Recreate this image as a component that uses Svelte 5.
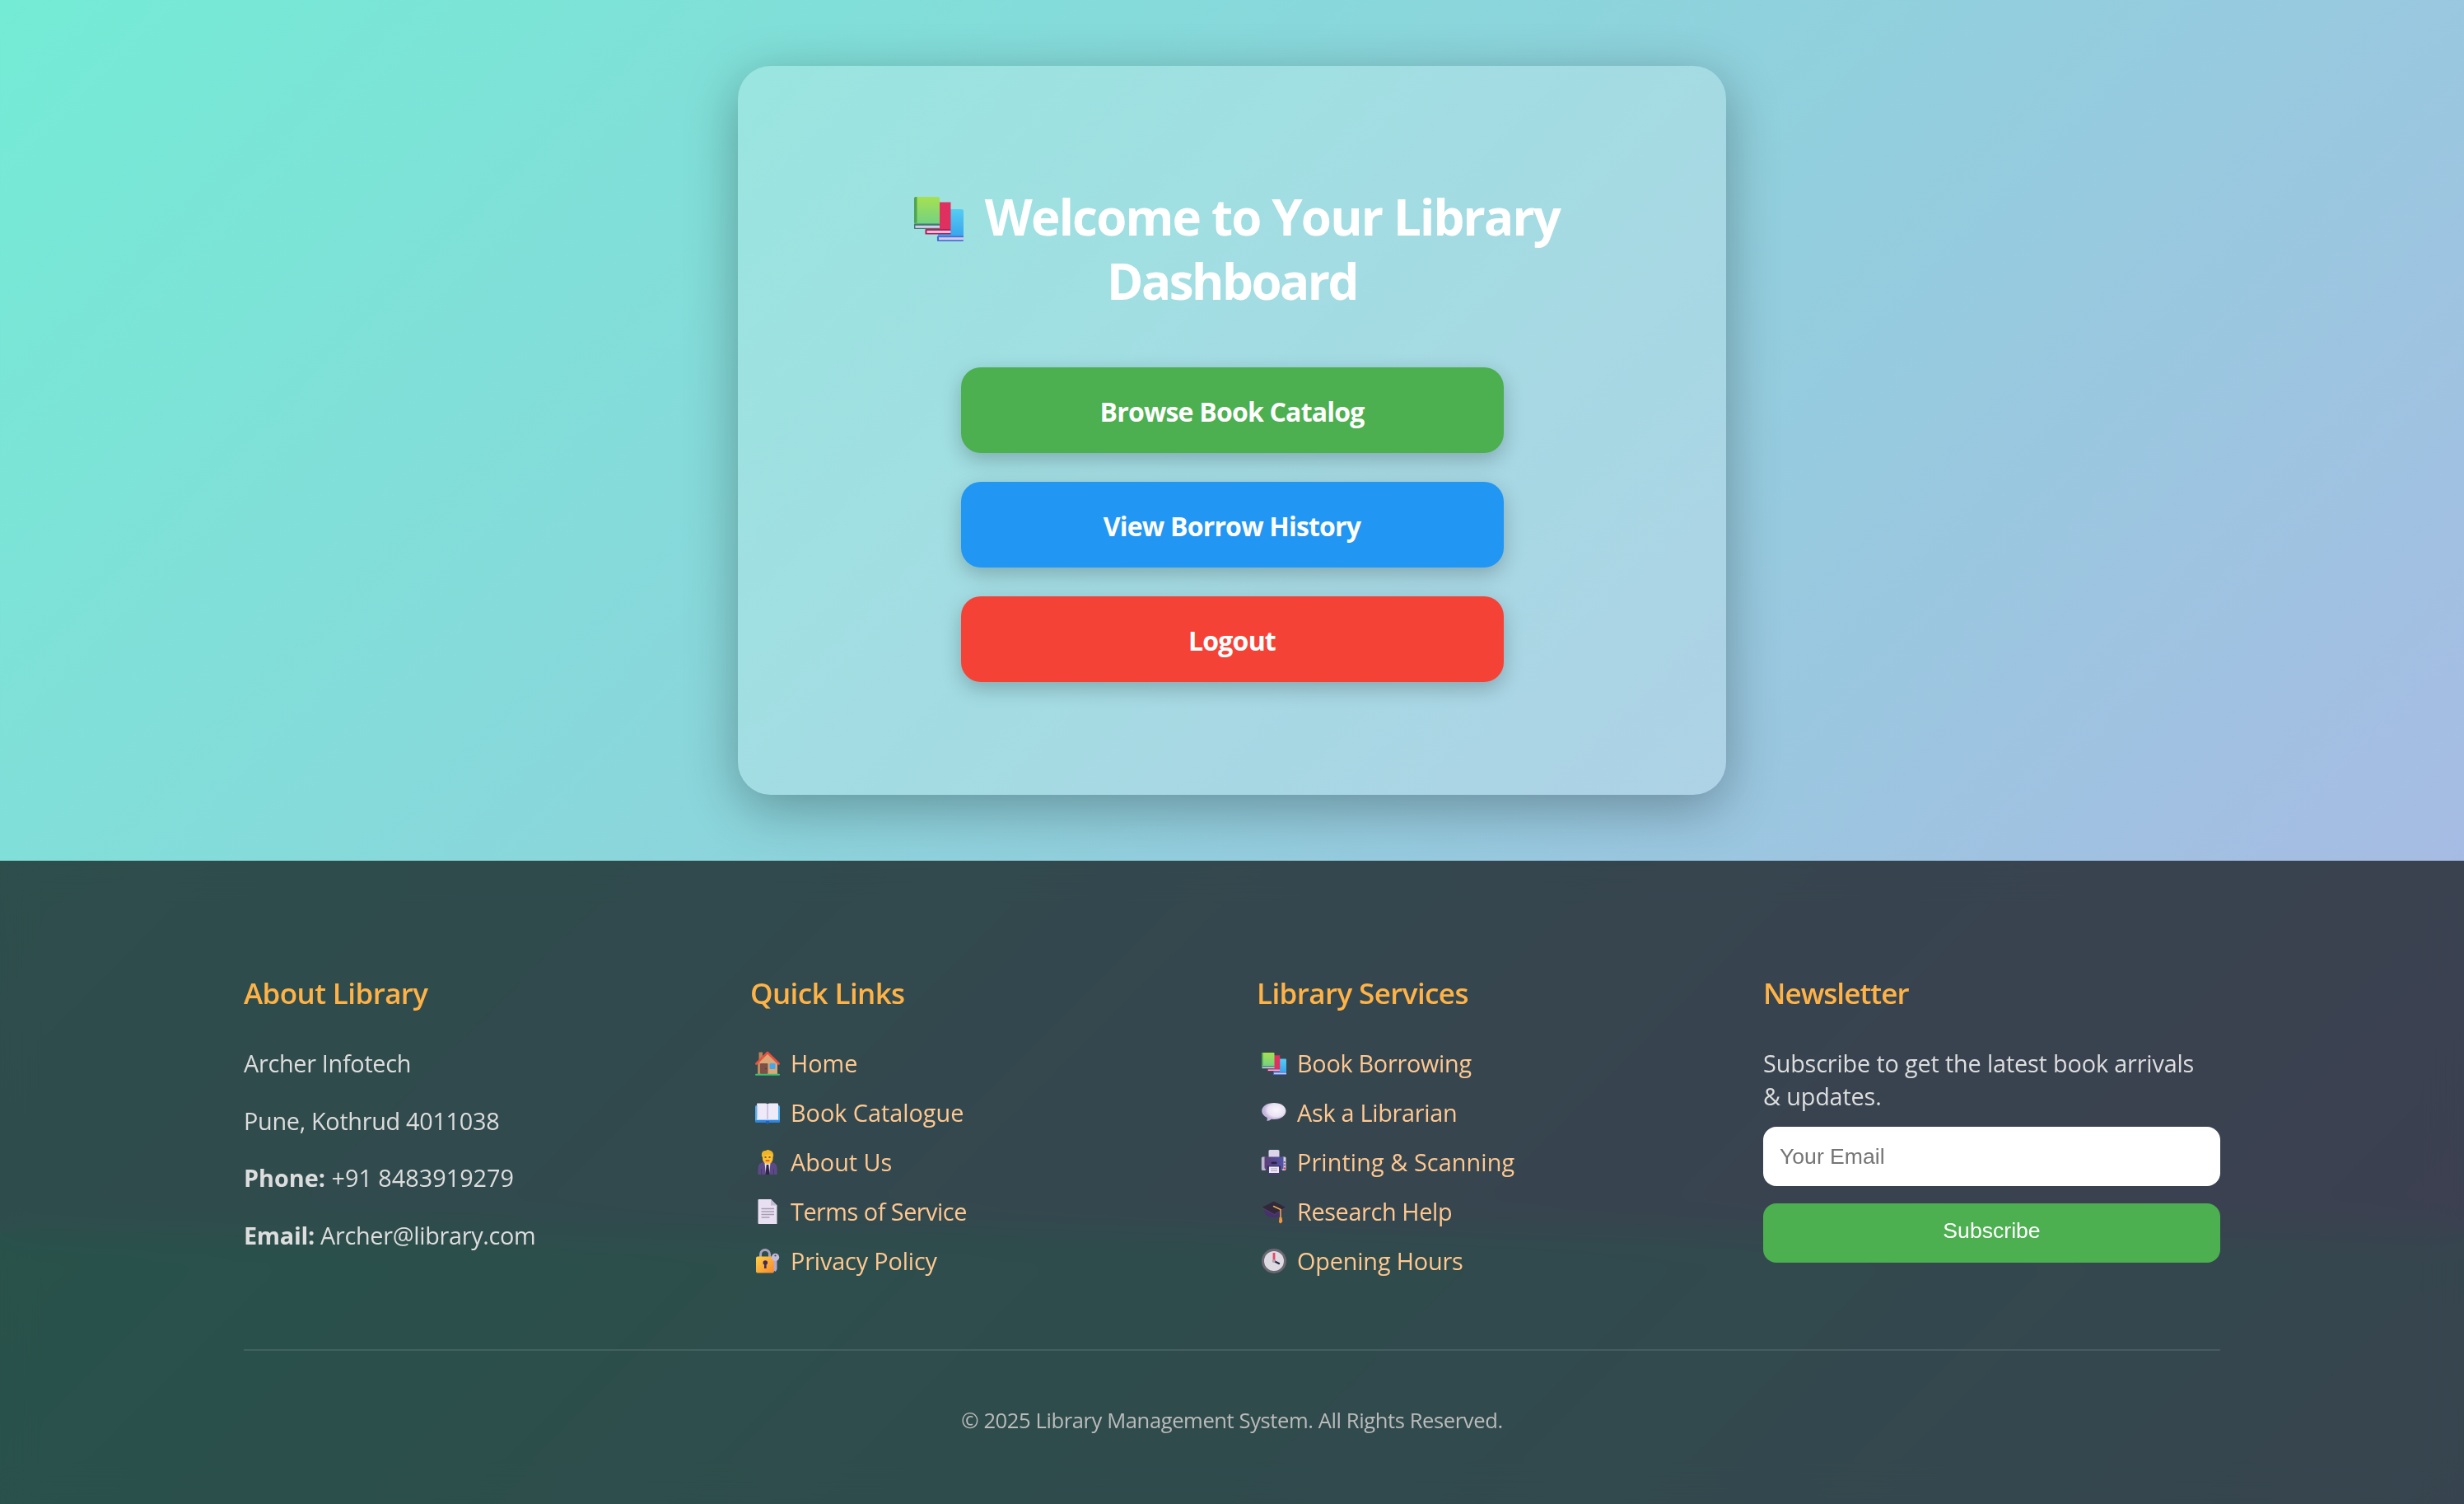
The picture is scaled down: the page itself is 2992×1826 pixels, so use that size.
<script>
  // icon, label, letter spacing in px
  const quick = [
    ['home', 'Home', 0],
    ['book', 'Book Catalogue', 0],
    ['person', 'About Us', 0],
    ['page', 'Terms of Service', -0.48],
    ['lock', 'Privacy Policy', -0.14],
  ];
  const services = [
    ['books', 'Book Borrowing', -0.27],
    ['bubble', 'Ask a Librarian', -0.27],
    ['printer', 'Printing & Scanning', 0.1],
    ['cap', 'Research Help', -0.36],
    ['clock', 'Opening Hours', -0.15],
  ];
</script>

<svelte:head><title>Library Dashboard</title></svelte:head>

{#snippet icon(name)}
  <svg class="icon" viewBox="0 0 32 32" aria-hidden="true">
    {#if name === 'home'}
      <path d="M5.500 2.500h4.500v10H5.500z" fill="#b98258" />
      <path d="M4 15 16 4l12 11v14H4z" fill="#dca777" />
      <path d="M4 15h3v14H4z" fill="#c08a5c" />
      <path d="M2.300 16.500 16 3l13.700 13.500" fill="none" stroke="#e9503f" stroke-width="2.600" stroke-linecap="round" stroke-linejoin="round" />
      <rect x="7" y="16" width="9.500" height="13" rx="1" fill="#7d5148" />
      <circle cx="14" cy="22.500" r=".7" fill="#4c2f2e" />
      <rect x="18.500" y="16" width="7" height="7" rx="1" fill="#3fa9f0" />
      <rect x="1" y="28.800" width="30" height="2" rx="1" fill="#38c172" />
    {:else if name === 'book'}
      <rect x="1" y="7" width="30" height="20.500" rx="1.500" fill="#4eb4f2" />
      <rect x="1" y="25" width="30" height="2.800" rx="1" fill="#2c86e4" />
      <path d="M3 5.500q0-1 1-1h10l2 1 2-1h10q1 0 1 1v19H3z" fill="#efeaf8" />
      <path d="M3 6h1.200v17H3z" fill="#cfc3e0" />
      <path d="M15 5.500h2V25h-2z" fill="#cfc6e6" />
      <path d="M14 26h4v1.500a2 2 0 0 1-4 0z" fill="#1f63c8" />
    {:else if name === 'person'}
      <path d="M4.500 31v-8q0-6 7-7h9q7 1 7 7v8z" fill="#5c4a86" />
      <path d="M12.500 17h7L18 31h-4z" fill="#e6e0f2" />
      <path d="M14.700 19h2.600l1.200 12h-5z" fill="#2e2344" />
      <path d="M8.500 24v7M23.500 24v7" stroke="#473a70" />
      <rect x="10" y="3" width="12.500" height="15" rx="6" fill="#fbc02f" />
      <path d="M9 9Q8 1.500 14 2 16 0 19 1.800 24 3 23 10L20.500 6l-6.500 1-4 3z" fill="#eeb52a" />
      <path d="M12.500 10h2M17.500 10h2" stroke="#5b3a2a" stroke-width="1.300" />
      <path d="M14.200 14.200h3.600" stroke="#d2433f" stroke-width="1.500" stroke-linecap="round" />
    {:else if name === 'page'}
      <path d="M4.500 2q0-1 1-1H20l7.500 7.500V31h-22q-1 0-1-1z" fill="#e8e0f2" />
      <path d="M20 1v7.500h7.500z" fill="#c4bad2" />
      <path d="M9 12.500h14.500M9 16h14.500M9 19.500h14.500M9 23h9" stroke="#a79db2" stroke-width="1.300" stroke-linecap="round" />
    {:else if name === 'lock'}
      <path d="M7.500 11V8a5.500 5.500 0 0 1 11 0V11" fill="none" stroke="#aaa1bc" stroke-width="3" />
      <rect x="2" y="10.500" width="22" height="20" rx="2" fill="url(#lockFill)" />
      <circle cx="13.300" cy="18" r="2.800" fill="#442a59" />
      <path d="M12 18h2.600v7H12z" fill="#442a59" />
      <path d="M24 12h3.500v14l-1.800 3-2-1.500z" fill="#b5a8cc" />
      <circle cx="25.500" cy="11.500" r="4.700" fill="#c5bad8" />
      <circle cx="25.500" cy="9.500" r="1.100" fill="#51436a" />
    {:else if name === 'books'}
      <g transform="matrix(1.034 0 0 .931 -1.07 2.07)">
        <path d="M16 9h14q1 0 1 1v17H16z" fill="url(#blueFill)" />
        <rect x="15.500" y="26.500" width="15.500" height="3.500" rx=".5" fill="#3d6fd4" />
        <rect x="16.500" y="27.400" width="14.500" height="1.700" fill="#d5c8f0" />
        <path d="M9 4.500h14.500V22H9z" fill="#e0305f" />
        <rect x="8.500" y="22" width="15" height="3.500" rx=".5" fill="#b71f52" />
        <rect x="9.500" y="23" width="14" height="1.600" fill="#e0c2e8" />
        <path d="M2 2q0-1 1-1h13q1 0 1 1v17H2z" fill="url(#greenFill)" />
        <path d="M2 2q0-1 1-1h.7v17H2z" fill="#4fa552" />
        <rect x="2" y="18.500" width="15" height="3.500" rx=".5" fill="#407a72" />
        <rect x="2.700" y="19.700" width="14.300" height="1.600" fill="#d9cbed" />
      </g>
    {:else if name === 'bubble'}
      <path d="M16 4c8.500 0 14.500 4.200 14.500 9.800S24.500 24 16 24c-1 0-2 0-3-.2Q11 25.800 7.500 26l.3-4C4 20.200 1.200 17.500 1.200 13.800 1.200 8.200 7.500 4 16 4z" fill="url(#bubbleFill)" />
    {:else if name === 'printer'}
      <rect x=".8" y="9.500" width="5.500" height="16.500" rx="1.500" fill="#beb5ce" />
      <rect x="25.500" y="9.500" width="5" height="16.500" rx="1.500" fill="#d6cee2" />
      <rect x="9.500" y="1" width="13" height="11" rx="1.500" fill="#dcd4e8" />
      <path d="M4.500 9.500h23V22q0 3-3 3h-17q-3 0-3-3z" fill="url(#printerFill)" />
      <rect x="12.500" y="15.500" width="7" height="2.800" rx="1" fill="#2a2344" />
      <path d="M8 20.500h16v4H8z" fill="#33285a" />
      <rect x="9" y="21" width="14" height="10" rx="1" fill="#4a397c" />
      <path d="M10 21.500h12v7.500H10z" fill="#f0ebf7" />
      <path d="M12 24h8M12 26.500h8" stroke="#aaa0ba" />
      <circle cx="28.700" cy="23.500" r="1.300" fill="#e3375b" />
      <path d="M27.700 16h2M27.700 19.500h2" stroke="#5b4a78" stroke-width="1.300" />
    {:else if name === 'cap'}
      <path d="M4.500 12h22v5q-2 6-11 6t-11-6z" fill="#47306d" />
      <path d="M16 3.500 30.500 11 16.500 19.500 1 11z" fill="#32283c" />
      <path d="m1 11 15.500 8.500 14-8.500" fill="none" stroke="#594a68" stroke-width=".8" />
      <path d="m15.500 9.500 8.500 4V24" fill="none" stroke="#eab047" stroke-width="1.500" stroke-linecap="round" />
      <path d="M22.500 23h3l.8 5-2.300 2.500-2-1.500z" fill="#f5983d" />
    {:else}
      <circle cx="16" cy="16" r="15" fill="#6c6872" />
      <circle cx="16" cy="16" r="12" fill="#dedae2" />
      <path d="M16 6v10" stroke="#e84665" stroke-width="2.800" />
      <path d="m17 16.500 5 2.500" stroke="#2b2346" stroke-width="2.300" stroke-linecap="round" />
      <circle cx="15.700" cy="16" r="2" fill="#aaa5b0" />
    {/if}
  </svg>
{/snippet}

{#snippet links(items)}
  <ul>
    {#each items as [name, label, track]}
      <li>{@render icon(name)}<a href="#top" style:letter-spacing="{track}px">{label}</a></li>
    {/each}
  </ul>
{/snippet}

<svg class="defs" width="0" height="0" aria-hidden="true">
  <defs>
    <linearGradient id="lockFill" x1="0" y1="0" x2="1" y2="1"><stop offset="0" stop-color="#fdd044" /><stop offset="1" stop-color="#f7882f" /></linearGradient>
    <linearGradient id="greenFill" x1="0" y1="0" x2="0" y2="1"><stop offset="0" stop-color="#a6e150" /><stop offset="1" stop-color="#72d184" /></linearGradient>
    <linearGradient id="blueFill" x1="0" y1="0" x2="0" y2="1"><stop offset="0" stop-color="#55cdf3" /><stop offset="1" stop-color="#38a4ec" /></linearGradient>
    <radialGradient id="bubbleFill" cx=".6" cy=".4"><stop offset="0" stop-color="#faf6fc" /><stop offset=".7" stop-color="#eae2f3" /><stop offset="1" stop-color="#c5b5dc" /></radialGradient>
    <linearGradient id="printerFill"><stop offset="0" stop-color="#5c3f78" /><stop offset="1" stop-color="#5154a4" /></linearGradient>
  </defs>
</svg>

<div class="page">
  <main>
    <section class="card">
      <h1><span class="big">{@render icon('books')}</span><span class="first">Welcome to Your Library</span><br /><span class="second">Dashboard</span></h1>
      <nav>
        <a class="btn green" href="#catalog">Browse Book Catalog</a>
        <a class="btn blue" href="#history">View Borrow History</a>
        <a class="btn red" href="#logout">Logout</a>
      </nav>
    </section>
  </main>

  <footer>
    <div class="cols">
      <section class="about">
        <h2>About Library</h2>
        <p>Archer Infotech</p>
        <p>Pune, Kothrud 4011038</p>
        <p class="phone"><strong>Phone:</strong> +91 8483919279</p>
        <p><strong>Email:</strong> Archer@library.com</p>
      </section>
      <section>
        <h2>Quick Links</h2>
        {@render links(quick)}
      </section>
      <section>
        <h2>Library Services</h2>
        {@render links(services)}
      </section>
      <section class="news">
        <h2>Newsletter</h2>
        <p>Subscribe to get the latest book arrivals<br />&amp; updates.</p>
        <input type="email" placeholder="Your Email" />
        <button type="button">Subscribe</button>
      </section>
    </div>
    <div class="copy">© 2025 Library Management System. All Rights Reserved.</div>
  </footer>
</div>

<style>
  :global(body) {
    margin: 0;
    background: linear-gradient(135deg, #74ebd5, #acb6e5) 0 0 / 100% 1496px;
  }
  .defs {
    position: absolute;
  }
  .page {
    height: 1826px;
    display: flex;
    flex-direction: column;
    font-family: 'Segoe UI', 'Open Sans', 'Noto Sans', sans-serif;
    color: #ddd;
  }
  main {
    box-sizing: border-box;
    height: 1045px;
    flex: none;
    padding-top: 80px;
    display: flex;
    justify-content: center;
    align-items: flex-start;
  }
  .card {
    box-sizing: border-box;
    width: 1200px;
    height: 885px;
    padding: 144px 160px;
    border-radius: 40px;
    background: rgba(255, 255, 255, 0.2);
    box-shadow: 0 16px 64px rgba(0, 0, 0, 0.3);
    display: flex;
    flex-direction: column;
    align-items: center;
  }
  h1 {
    margin: 0;
    height: 156px;
    font-size: 60px;
    line-height: 78px;
    font-weight: 700;
    color: #fff;
    text-align: center;
    white-space: nowrap;
  }
  .first {
    letter-spacing: -1.830px;
  }
  .second {
    letter-spacing: -2.500px;
  }
  .big .icon {
    width: 64px;
    height: 64px;
    margin: -10px 24px -10px 10px;
    vertical-align: -1px;
  }
  nav {
    margin-top: 66px;
    display: flex;
    flex-direction: column;
    gap: 35.200px;
  }
  .btn {
    width: 659px;
    height: 104px;
    border-radius: 24px;
    display: flex;
    align-items: center;
    justify-content: center;
    padding-top: 2px;
    box-sizing: border-box;
    color: #fff;
    font-size: 32px;
    font-weight: 700;
    letter-spacing: -0.800px;
    text-decoration: none;
    box-shadow: 0 8px 24px rgba(0, 0, 0, 0.22);
  }
  .green { background: #4caf50; }
  .blue { background: #2196f3; }
  .red { background: #f44336; }
  footer {
    flex: 1;
    box-sizing: border-box;
    padding: 134px 296px 0;
    background: rgba(0, 0, 0, 0.65);
    backdrop-filter: blur(20px);
  }
  .cols {
    display: grid;
    grid-template-columns: repeat(4, 555px);
    column-gap: 60px;
    height: 459px;
    border-bottom: 2px solid rgba(255, 255, 255, 0.1);
  }
  h2 {
    margin: 0 0 38px;
    font-size: 35px;
    line-height: 54px;
    font-weight: 600;
    letter-spacing: -0.600px;
    color: #ffb347;
    white-space: nowrap;
  }
  .news h2 {
    letter-spacing: -0.950px;
  }
  p {
    margin: 0;
    font-size: 28.800px;
    line-height: 40px;
    letter-spacing: -0.150px;
    white-space: nowrap;
  }
  .about p {
    margin-bottom: 29.700px;
    letter-spacing: -0.290px;
  }
  .about .phone {
    letter-spacing: 0;
  }
  ul {
    margin: 0;
    padding: 0;
    list-style: none;
  }
  li {
    height: 40px;
    margin-bottom: 20px;
    display: flex;
    align-items: center;
    font-size: 28.800px;
    line-height: 40px;
    white-space: nowrap;
  }
  li .icon {
    width: 32px;
    height: 32px;
    margin: 0 12px 0 5px;
  }
  li a {
    color: #ffc890;
    text-decoration: none;
  }
  input,
  button {
    display: block;
    box-sizing: border-box;
    width: 555px;
    height: 72px;
    border: 0;
    border-radius: 16px;
    font: 26.600px 'Liberation Sans', Arial, sans-serif;
  }
  input {
    margin: 17px 0 20.600px;
    padding: 0 20px;
    background: #fff;
  }
  input::placeholder { color: #757575; }
  button {
    background: #4caf50;
    color: #fff;
    padding-bottom: 6px;
  }
  .copy {
    padding-top: 65px;
    text-align: center;
    font-size: 25.600px;
    line-height: 40px;
    letter-spacing: -0.420px;
    color: #bbb;
  }
</style>
